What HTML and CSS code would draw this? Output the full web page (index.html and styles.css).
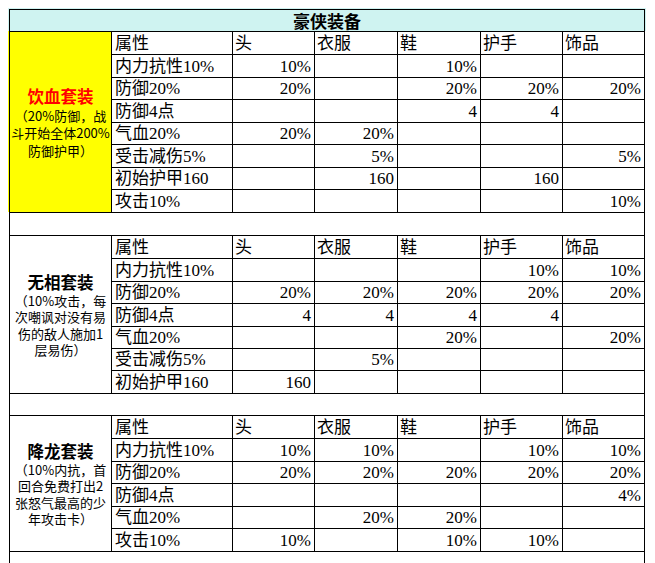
FILE: index.html
```html
<!DOCTYPE html>
<html lang="zh">
<head>
<meta charset="utf-8">
<title>豪侠装备</title>
<link rel="stylesheet" href="styles.css">
</head>
<body>
<div class="frame">
<div class="sheet">
  <div class="cell title">豪侠装备</div>

  <div class="cell set set1"><div class="name red">饮血套装</div><div class="desc d1">（20%防御，战<br>斗开始全体200%<br>防御护甲）</div></div>
  <div class="cell hd first">属性</div><div class="cell hd">头</div><div class="cell hd">衣服</div><div class="cell hd">鞋</div><div class="cell hd">护手</div><div class="cell hd">饰品</div>
  <div class="cell at">内力抗性10%</div><div class="cell v">10%</div><div class="cell v"></div><div class="cell v">10%</div><div class="cell v"></div><div class="cell v"></div>
  <div class="cell at">防御20%</div><div class="cell v">20%</div><div class="cell v"></div><div class="cell v">20%</div><div class="cell v">20%</div><div class="cell v">20%</div>
  <div class="cell at">防御4点</div><div class="cell v"></div><div class="cell v"></div><div class="cell v">4</div><div class="cell v">4</div><div class="cell v"></div>
  <div class="cell at">气血20%</div><div class="cell v">20%</div><div class="cell v">20%</div><div class="cell v"></div><div class="cell v"></div><div class="cell v"></div>
  <div class="cell at">受击减伤5%</div><div class="cell v"></div><div class="cell v">5%</div><div class="cell v"></div><div class="cell v"></div><div class="cell v">5%</div>
  <div class="cell at">初始护甲160</div><div class="cell v"></div><div class="cell v">160</div><div class="cell v"></div><div class="cell v">160</div><div class="cell v"></div>
  <div class="cell at">攻击10%</div><div class="cell v"></div><div class="cell v"></div><div class="cell v"></div><div class="cell v"></div><div class="cell v">10%</div>

  <div class="cell spacer"></div>

  <div class="cell set set2"><div class="name">无相套装</div><div class="desc">（10%攻击，每<br>次嘲讽对没有易<br>伤的敌人施加1<br>层易伤）</div></div>
  <div class="cell hd first">属性</div><div class="cell hd">头</div><div class="cell hd">衣服</div><div class="cell hd">鞋</div><div class="cell hd">护手</div><div class="cell hd">饰品</div>
  <div class="cell at">内力抗性10%</div><div class="cell v"></div><div class="cell v"></div><div class="cell v"></div><div class="cell v">10%</div><div class="cell v">10%</div>
  <div class="cell at">防御20%</div><div class="cell v">20%</div><div class="cell v">20%</div><div class="cell v">20%</div><div class="cell v">20%</div><div class="cell v">20%</div>
  <div class="cell at">防御4点</div><div class="cell v">4</div><div class="cell v">4</div><div class="cell v">4</div><div class="cell v">4</div><div class="cell v"></div>
  <div class="cell at">气血20%</div><div class="cell v"></div><div class="cell v"></div><div class="cell v">20%</div><div class="cell v"></div><div class="cell v">20%</div>
  <div class="cell at">受击减伤5%</div><div class="cell v"></div><div class="cell v">5%</div><div class="cell v"></div><div class="cell v"></div><div class="cell v"></div>
  <div class="cell at">初始护甲160</div><div class="cell v">160</div><div class="cell v"></div><div class="cell v"></div><div class="cell v"></div><div class="cell v"></div>

  <div class="cell spacer"></div>

  <div class="cell set set3"><div class="name">降龙套装</div><div class="desc">（10%内抗，首<br>回合免费打出2<br>张怒气最高的少<br>年攻击卡）</div></div>
  <div class="cell hd first">属性</div><div class="cell hd">头</div><div class="cell hd">衣服</div><div class="cell hd">鞋</div><div class="cell hd">护手</div><div class="cell hd">饰品</div>
  <div class="cell at">内力抗性10%</div><div class="cell v">10%</div><div class="cell v">10%</div><div class="cell v"></div><div class="cell v">10%</div><div class="cell v">10%</div>
  <div class="cell at">防御20%</div><div class="cell v">20%</div><div class="cell v">20%</div><div class="cell v">20%</div><div class="cell v">20%</div><div class="cell v">20%</div>
  <div class="cell at">防御4点</div><div class="cell v"></div><div class="cell v"></div><div class="cell v"></div><div class="cell v"></div><div class="cell v">4%</div>
  <div class="cell at">气血20%</div><div class="cell v"></div><div class="cell v">20%</div><div class="cell v">20%</div><div class="cell v"></div><div class="cell v"></div>
  <div class="cell at">攻击10%</div><div class="cell v">10%</div><div class="cell v"></div><div class="cell v">10%</div><div class="cell v">10%</div><div class="cell v"></div>

  <div class="cell spacer"></div>
</div>
</div>
</body>
</html>
```

FILE: styles.css
```css
html, body {
  margin: 0;
  padding: 0;
  background: #ffffff;
}
body {
  padding: 8px 0 0 8px;
  font-family: "Liberation Serif", "Noto Sans CJK SC", serif;
  color: #000;
}
.frame {
  width: 638px;
  padding: 1px 1px 0 1px;
  box-sizing: border-box;
  background:
    linear-gradient(#cff3f1, #cff3f1) 0 0 / 100% 23px no-repeat,
    linear-gradient(#ffff00, #ffff00) 0 23px / 1px 181px no-repeat;
}
.sheet {
  display: grid;
  grid-template-columns: 102px 121px 82px 83px 83px 82px 82px;
  grid-template-rows:
    22px
    23px 23px 22px 23px 22px 23px 22px 23px
    23px
    23px 23px 22px 23px 22px 22px 23px
    22px
    23px 23px 22px 23px 22px 23px
    23px;
  border-left: 1px solid #000;
  border-top: 1px solid #000;
  background: #fff;
}
.cell {
  box-sizing: border-box;
  border-right: 1px solid #000;
  border-bottom: 1px solid #000;
  display: flex;
  align-items: flex-end;
  font-size: 17px;
  line-height: 20px;
  white-space: nowrap;
  overflow: hidden;
}
.title {
  grid-column: 1 / -1;
  background: #cff3f1;
  justify-content: center;
  align-items: center;
  font-family: "Noto Sans CJK SC", sans-serif;
  font-weight: 700;
  font-size: 17px;
  line-height: 20px;
  overflow: visible;
}
.set {
  grid-column: 1;
  flex-direction: column;
  justify-content: center;
  align-items: center;
  text-align: center;
  font-family: "Noto Sans CJK SC", sans-serif;
}
.set1 { grid-row: span 8; background: #ffff00; }
.set2 { grid-row: span 7; }
.set3 { grid-row: span 6; }
.name {
  font-weight: 700;
  font-size: 16.5px;
  line-height: 22px;
}
.red { color: #ff0000; }
.desc {
  font-size: 13px;
  line-height: 16.5px;
}
.d1 { line-height: 17.5px; }
.hd {
  padding-left: 2px;
}
.hd.first, .at {
  padding-left: 3px;
}
.v {
  justify-content: flex-end;
  padding-right: 3px;
}
.spacer {
  grid-column: 1 / -1;
}
```
